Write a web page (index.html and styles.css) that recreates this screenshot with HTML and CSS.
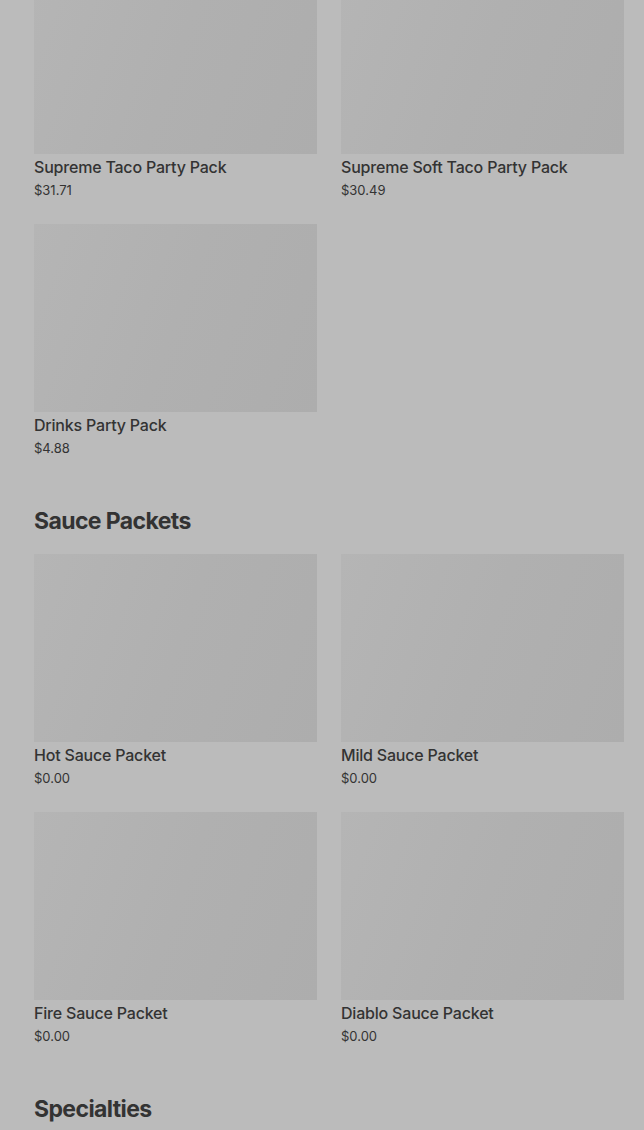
FILE: index.html
```html
<!DOCTYPE html>
<html lang="en">
<head>
    <meta charset="UTF-8">
    <meta name="viewport" content="width=device-width, initial-scale=1.0">
    <title>Menu</title>
    <link rel="stylesheet" href="styles.css">
</head>
<body>

    <div class="menu">
        <section class="menu-section first">
            <div class="item-grid">
                <div class="item">
                    <div class="item-img"></div>
                    <div class="item-name">Supreme Taco Party Pack</div>
                    <div class="item-price">$31.71</div>
                </div>
                <div class="item">
                    <div class="item-img"></div>
                    <div class="item-name">Supreme Soft Taco Party Pack</div>
                    <div class="item-price">$30.49</div>
                </div>
                <div class="item">
                    <div class="item-img"></div>
                    <div class="item-name">Drinks Party Pack</div>
                    <div class="item-price">$4.88</div>
                </div>
            </div>
        </section>

        <section class="menu-section">
            <h2>Sauce Packets</h2>
            <div class="item-grid">
                <div class="item">
                    <div class="item-img"></div>
                    <div class="item-name">Hot Sauce Packet</div>
                    <div class="item-price">$0.00</div>
                </div>
                <div class="item">
                    <div class="item-img"></div>
                    <div class="item-name">Mild Sauce Packet</div>
                    <div class="item-price">$0.00</div>
                </div>
                <div class="item">
                    <div class="item-img"></div>
                    <div class="item-name">Fire Sauce Packet</div>
                    <div class="item-price">$0.00</div>
                </div>
                <div class="item">
                    <div class="item-img"></div>
                    <div class="item-name">Diablo Sauce Packet</div>
                    <div class="item-price">$0.00</div>
                </div>
            </div>
        </section>

        <section class="menu-section">
            <h2>Specialties</h2>
        </section>
    </div>

</body>
</html>
```

FILE: styles.css
```css
body {
    font-family: Inter, "Liberation Sans", sans-serif;
    background-color: #bbbbbb;
    color: #333333;
    margin: 0;
    padding: 0;
    overflow: hidden;
}
.menu {
    padding: 0 20px 0 34px;
    margin-top: -34px;
}
.menu-section {
    margin-bottom: 48px;
}
.menu-section h2 {
    font-size: 23px;
    font-weight: 700;
    line-height: 33px;
    margin: 0 0 16px 0;
    letter-spacing: -0.6px;
}
.item-grid {
    display: grid;
    grid-template-columns: 283px 283px;
    column-gap: 24px;
    row-gap: 25px;
}
.item-img {
    height: 188px;
    background: linear-gradient(110deg, #b5b5b5 0%, #b0b0b0 50%, #adadad 100%);
}
.item-name {
    font-size: 16px;
    font-weight: 500;
    line-height: 20px;
    margin-top: 3px;
    letter-spacing: -0.2px;
}
.item-price {
    font-size: 13px;
    line-height: 18px;
    margin-top: 4px;
}
```
